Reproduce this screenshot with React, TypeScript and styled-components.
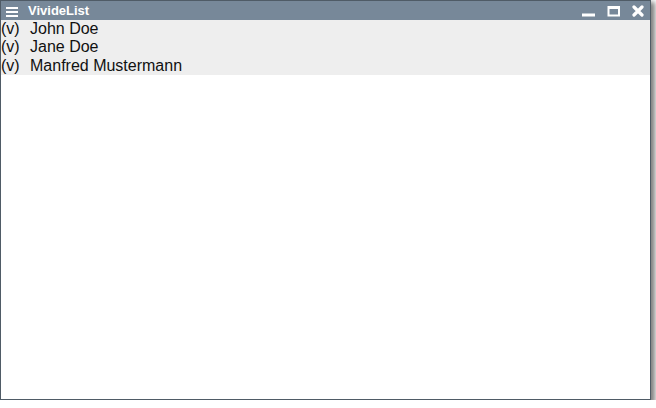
import React from "react";
import styled, { createGlobalStyle } from "styled-components";

const Global = createGlobalStyle`
  html, body { margin: 0; padding: 0; background: #fff; }
  body { font-family: "Liberation Sans", Arial, sans-serif; }
`;

const Window = styled.div`
  width: 649px;
  height: 398px;
  border: 1px solid #4f5b66;
  box-shadow: 3px 3px 5px 1px rgba(0, 0, 0, 0.5);
  display: flex;
  flex-direction: column;
  background: #fff;
`;

const TitleBar = styled.div`
  height: 19px;
  background: #778899;
  display: flex;
  align-items: center;
  padding: 0 6px 0 5px;
  color: #fff;
`;

const Title = styled.span`
  font-weight: bold;
  font-size: 13px;
  margin-left: 10px;
  flex: 1;
`;

const Controls = styled.div`
  display: flex;
  align-items: center;
  gap: 11px;
`;

const List = styled.div`
  background: #eeeeee;
  display: flex;
  flex-direction: column;
`;

const Row = styled.div`
  display: flex;
  font-size: 16px;
  color: #111;
  line-height: 18.3px;
`;

const Mark = styled.span`
  width: 29px;
`;

const Icon = ({ children, w = 14 }: { children: React.ReactNode; w?: number }) => (
  <svg width={w} height={12} viewBox={`0 0 ${w} 12`} fill="#fff">
    {children}
  </svg>
);

const names = ["John Doe", "Jane Doe", "Manfred Mustermann"];

export default function App() {
  return (
    <>
      <Global />
      <Window>
        <TitleBar>
          <Icon w={12}>
            <rect x="0" y="2" width="12" height="2" />
            <rect x="0" y="6" width="12" height="2" />
            <rect x="0" y="10" width="12" height="2" />
          </Icon>
          <Title>VivideList</Title>
          <Controls>
            <Icon>
              <rect x="0" y="8.5" width="13" height="3" />
            </Icon>
            <Icon>
              <path d="M0.5 1h12.5v10.5H0.5z M2.5 4v5.5h8.5V4z" fillRule="evenodd" />
            </Icon>
            <Icon w={12}>
              <path
                d="M2 2 L10 10 M10 2 L2 10"
                stroke="#fff"
                strokeWidth="3.2"
                strokeLinecap="round"
                fill="none"
              />
            </Icon>
          </Controls>
        </TitleBar>
        <List>
          {names.map((n) => (
            <Row key={n}>
              <Mark>(v)</Mark>
              <span>{n}</span>
            </Row>
          ))}
        </List>
      </Window>
    </>
  );
}
